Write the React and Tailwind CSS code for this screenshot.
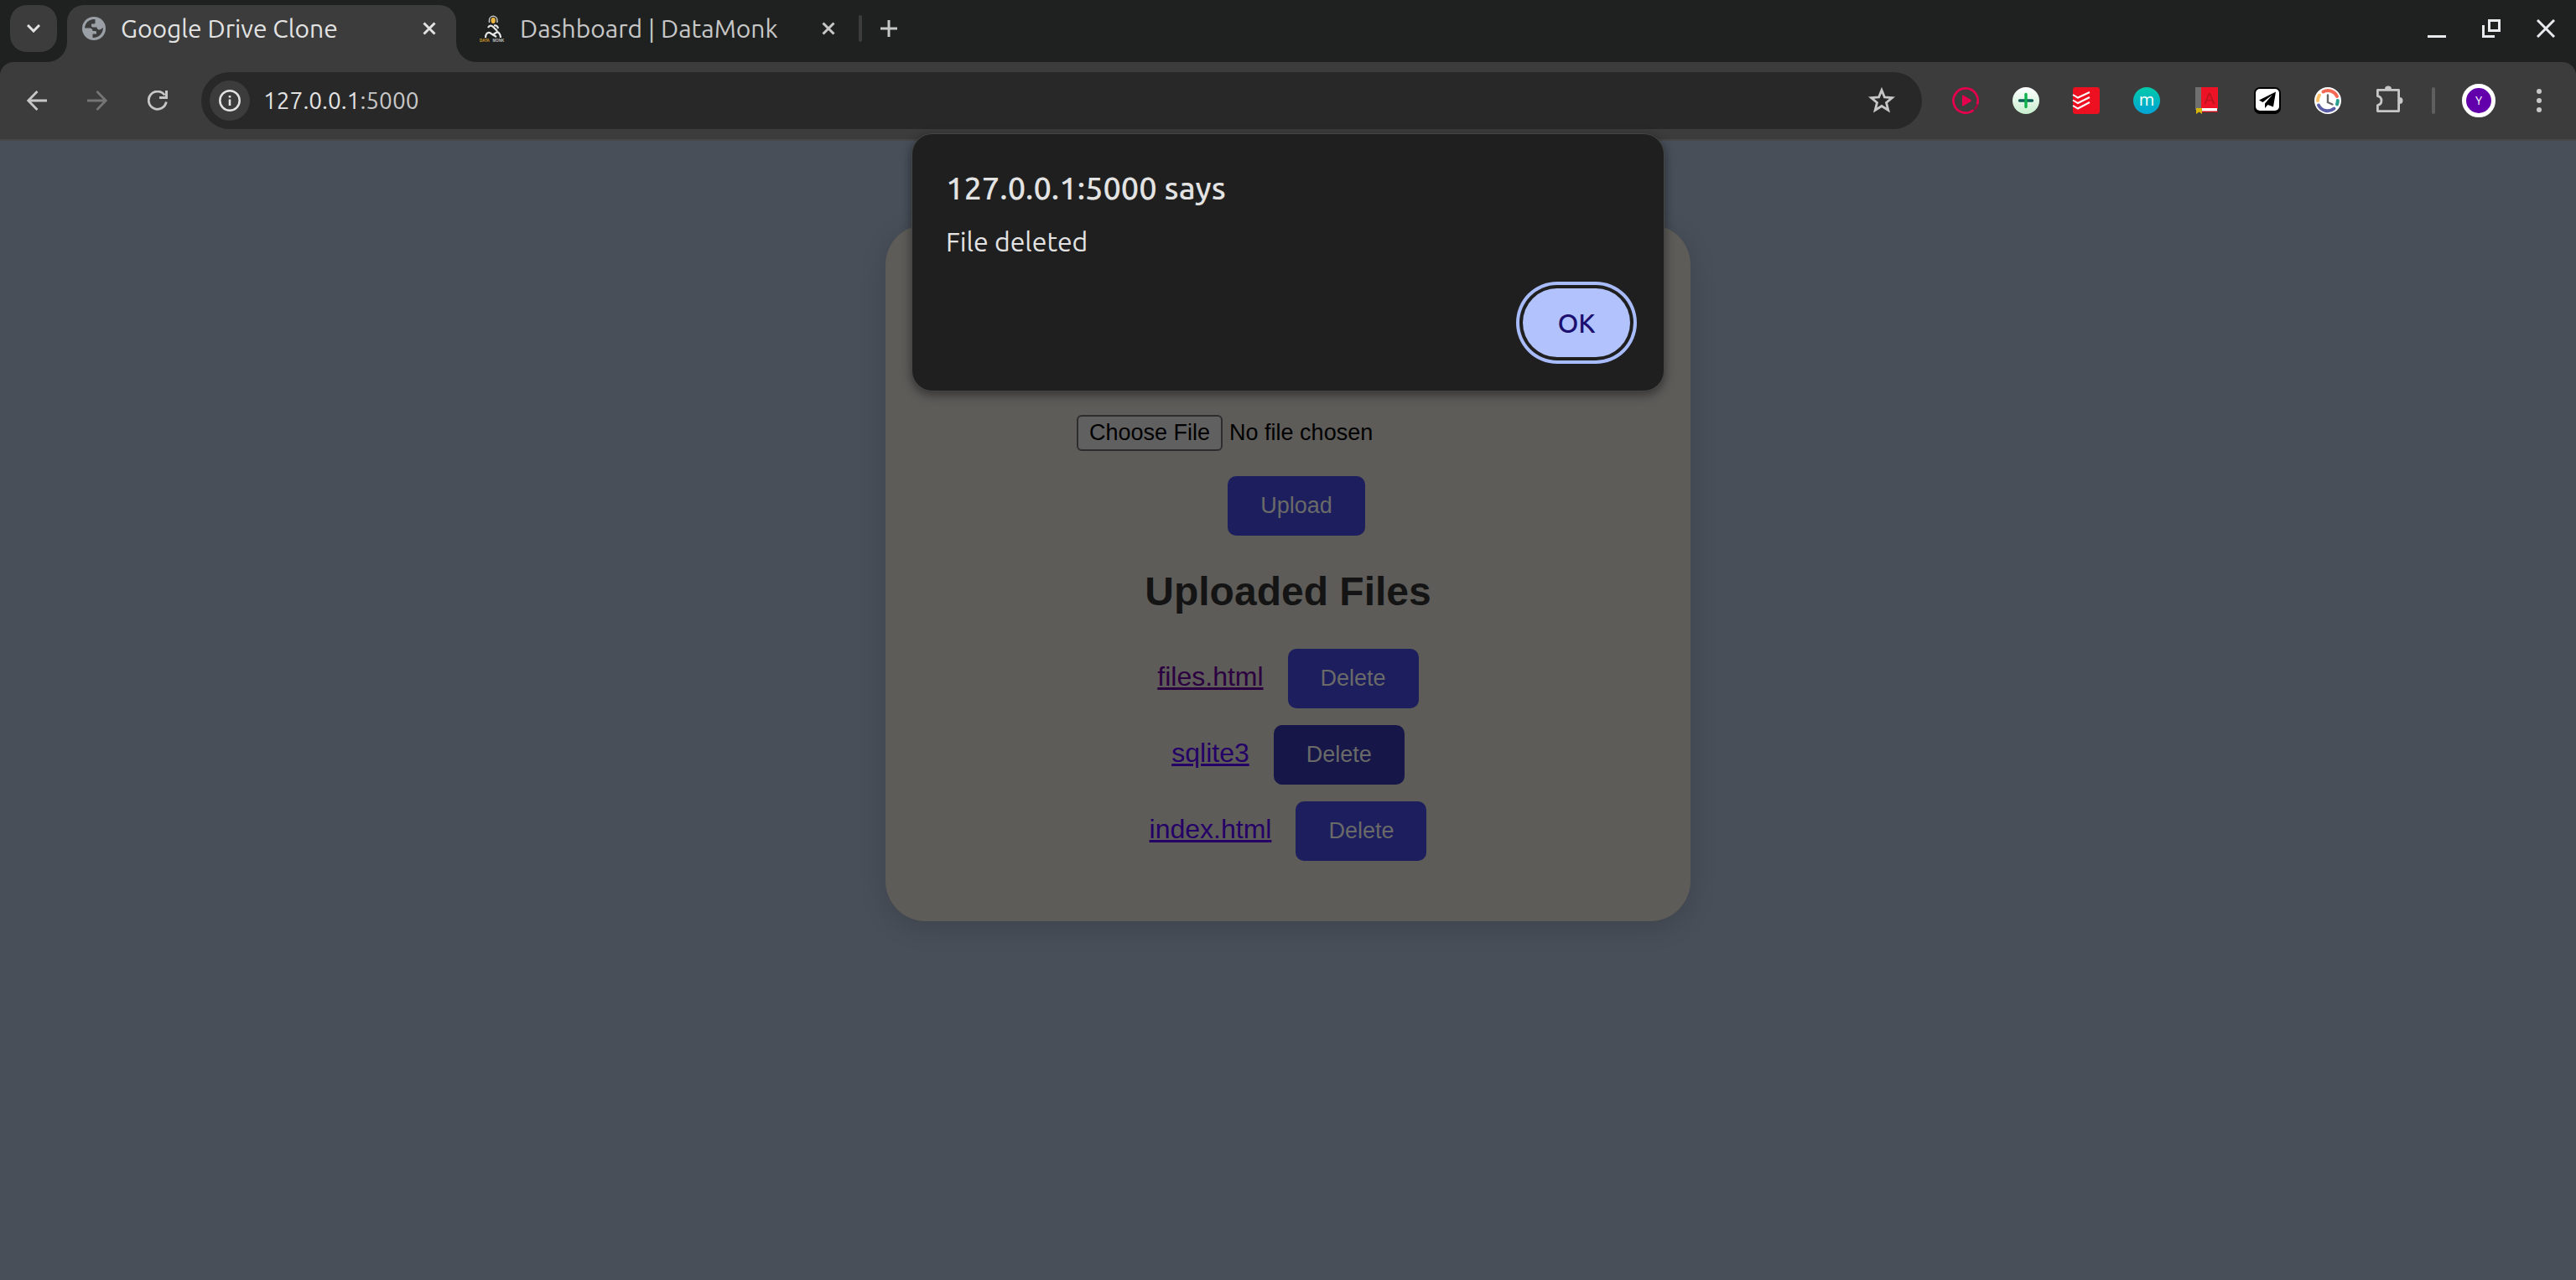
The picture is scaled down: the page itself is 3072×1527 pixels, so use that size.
const UI = "font-['Ubuntu','Noto_Sans',sans-serif]";

const Svg = ({ children, className, vb = "0 0 32 32" }) => (
  <svg viewBox={vb} className={className} fill="none" aria-hidden="true">{children}</svg>
);

const Cross = ({ className }) => (
  <Svg vb="0 0 16 16" className={className}>
    <path d="M1.5 1.5 14.5 14.5M14.5 1.5 1.5 14.5" stroke="currentColor" strokeWidth="3" />
  </Svg>
);

const Globe = () => (
  <Svg vb="0 0 28 28" className="size-7 shrink-0">
    <circle cx="14" cy="14" r="14" fill="#9aa0a6" />
    <path d="M12 3.2C7 4 3.2 8.400 3.100 13.500L9 13.500C11 13.500 12.500 15 12.500 17L15.500 17C16.500 17 17 17.600 17 18.500L17 20.500L12.500 20.500L12.500 24.900C17 25.400 21 23 23 19.800C24.400 17.600 25 15.500 24.900 13L22 15C20 16 17.500 15 17.500 12.500L13 12.500C11.500 12.500 11 11.500 11 10.500L11 8.500L14 8.500C15.500 8.500 15.500 7.500 15.500 6.500L15.500 3.200C14.500 3 13 3 12 3.200Z" fill="#3c3c3c" />
  </Svg>
);

const Monk = () => (
  <Svg vb="0 0 32 32" className="size-8 shrink-0">
    <path d="M11.500 9V6a4.700 4.700 0 0 1 9.400 0V9" stroke="#c9c9c9" strokeWidth="1.500" />
    <ellipse cx="16.200" cy="6.500" rx="2.700" ry="3.400" fill="#eab543" />
    <path d="M10 15c1.500-3 4-3 6-1l5 5M22 16c-.5-3-2.500-4-5-3.500M7 27c0-4 2-7 5-6l8 5M25 27c0-4-2-6-4-7l-6 4" stroke="#e8e8e8" strokeWidth="2.200" />
    <text x="0" y="32" fontSize="4.500" fontWeight="700" fontFamily="Liberation Sans" fill="#d9a02c">DATA</text>
    <text x="15.500" y="32" fontSize="4.500" fontWeight="700" fontFamily="Liberation Sans" fill="#bdbdbd">MONK</text>
  </Svg>
);

const extensions = [
  ["Video player", (
    <>
      <path d="M25.500 27.200A14.600 14.600 0 1 1 30 20.500" stroke="#e5004f" strokeWidth="2.800" />
      <path d="M27 26.500 30.500 21" stroke="#a30a3c" strokeWidth="2.500" />
      <path d="M12 10.500Q12 9 13.500 9.800L22.500 15Q24 16 22.500 17L13.500 22.300Q12 23 12 21.500Z" fill="#e5004f" />
    </>
  )],
  ["Add", (
    <>
      <defs><linearGradient id="mint" x1="0" y1="0" x2="0" y2="1"><stop stopColor="#fff" /><stop offset="1" stopColor="#c8efce" /></linearGradient></defs>
      <circle cx="16" cy="16" r="16" fill="url(#mint)" />
      <path d="M8.500 16H23.500" stroke="#0b5f57" strokeWidth="3.400" strokeLinecap="round" />
      <path d="M16 8.500V23.500" stroke="#10b24c" strokeWidth="3.400" strokeLinecap="round" />
    </>
  )],
  ["Tasks", (
    <>
      <rect width="32" height="32" rx="3" fill="#ec1020" />
      <path d="M0 9 6 12.500 20 6M0 15.500 6 19 20 12M0 22 6 25.500 20 18" stroke="#fff" strokeWidth="2" />
    </>
  )],
  ["Mail", (
    <>
      <defs><linearGradient id="teal" x1="0" y1="0" x2="0" y2="1"><stop stopColor="#00cba9" /><stop offset="1" stopColor="#00a3d6" /></linearGradient></defs>
      <circle cx="16" cy="16" r="16" fill="url(#teal)" />
      <text x="16" y="21.500" textAnchor="middle" fontSize="20" fontFamily="Open Sans" fill="#fff">m</text>
    </>
  )],
  ["Dictionary", (
    <>
      <rect x="2" y="0" width="7" height="27" fill="#707070" />
      <rect x="9" y="0" width="20" height="26" fill="#ee1226" />
      <text x="18.500" y="20" textAnchor="middle" fontSize="19" fontFamily="Liberation Sans" fill="#b9141f">A</text>
      <rect x="7" y="25" width="21" height="4" fill="#fff" />
      <rect x="8" y="28.500" width="21" height="1.500" fill="#c30f1c" />
      <path d="M3 25H10V32L6.500 29.500 3 32Z" fill="#d9b50c" />
    </>
  )],
  ["Send", (
    <>
      <rect width="32" height="32" rx="7" fill="#000" />
      <rect x="2" y="2" width="28" height="26" rx="5" fill="#fff" />
      <path d="M26 5.500 6 15.500 10.500 18 22 9 13 19.500V25L16.500 21 23 23.500Z" fill="#000" />
    </>
  )],
  ["Timer", (
    <>
      <circle cx="16" cy="16" r="16" fill="#fff" />
      <path d="M10.500 5.500A12 12 0 0 1 27 11" stroke="#f56a55" strokeWidth="4" strokeLinecap="round" />
      <path d="M27.800 16A12 12 0 0 1 27 20.500" stroke="#2a9d8f" strokeWidth="4" strokeLinecap="round" />
      <path d="M5 21.500A12 12 0 0 0 23.500 25.500" stroke="#5b5ea6" strokeWidth="4" strokeLinecap="round" />
      <path d="M4 16A12 12 0 0 1 6 9.500" stroke="#ffc06a" strokeWidth="4" strokeLinecap="round" />
      <path d="M16 9.500V18L21.500 20.500" stroke="#666" strokeWidth="2.400" strokeLinecap="round" />
    </>
  )],
  ["Extensions", (
    <>
      <path d="M3.400 3.400H28.600V28.600H3.400V21.500A5.600 5.600 0 0 0 3.400 10.500Z" stroke="#c7c7c7" strokeWidth="2.800" strokeLinejoin="round" />
      <path d="M12 2.500a4 4 0 0 1 8 0ZM29.500 12a4 4 0 0 1 0 8Z" fill="#c7c7c7" />
    </>
  )],
];

const files = [
  { name: "files.html", link: "text-[#2b0040]", button: "bg-[#1c1e5e]" },
  { name: "sqlite3", link: "text-[#240066]", button: "bg-[#161748]" },
  { name: "index.html", link: "text-[#240066]", button: "bg-[#1c1e5e]" },
];

const actionButton = "rounded-[10px] px-[39px] py-5 text-[27px] leading-[31px] text-[#6a6a68]";

function TabStrip() {
  return (
    <div className="flex h-[74px] items-start bg-[#1f2120] pl-3 pt-1.5">
      <button aria-label="Search tabs" className="flex size-14 shrink-0 items-center justify-center rounded-[20px] bg-[#3c3c3c]">
        <Svg vb="0 0 16 10" className="h-2.5 w-4"><path d="M1 1 8 8 15 1" stroke="#e3e3e3" strokeWidth="3" /></Svg>
      </button>
      <div className="relative ml-3 flex h-[68px] w-[464px] shrink-0 items-start rounded-t-[20px] bg-[#3c3c3c] pl-[18px] pr-6">
        <Svg vb="0 0 24 24" className="absolute -left-6 bottom-0 size-6"><path d="M24 0V24H0A24 24 0 0 0 24 0Z" fill="#3c3c3c" /></Svg>
        <Svg vb="0 0 24 24" className="absolute -right-6 bottom-0 size-6"><path d="M0 0V24H24A24 24 0 0 1 0 0Z" fill="#3c3c3c" /></Svg>
        <div className="flex h-14 w-full items-center">
          <Globe />
          <span className="ml-[18px] flex-1 whitespace-nowrap text-[30px] leading-10 text-[#e3e3e3]">Google Drive Clone</span>
          <button aria-label="Close tab" className="text-[#e3e3e3]"><Cross className="size-4" /></button>
        </div>
      </div>
      <div className="flex h-14 w-[452px] shrink-0 items-center pl-7">
        <Monk />
        <span className="ml-4 flex-1 whitespace-nowrap text-[30px] leading-10 text-[#c7c7c7]">Dashboard | DataMonk</span>
        <button aria-label="Close tab" className="text-[#c7c7c7]"><Cross className="size-4" /></button>
      </div>
      <div className="flex h-14 flex-1 items-center pl-7 pr-[25px] text-[#e8eaed]">
        <span className="h-8 w-1 rounded bg-[#3c3c3c]" />
        <button aria-label="New tab" className="ml-[22px] text-[#c7c7c7]">
          <Svg vb="0 0 20 20" className="size-5"><path d="M0 10H20M10 0V20" stroke="currentColor" strokeWidth="3" /></Svg>
        </button>
        <div className="ml-auto flex gap-[43px]">
          <button aria-label="Minimize"><Svg vb="0 0 22 22" className="size-[22px]"><path d="M0 20.500H22" stroke="currentColor" strokeWidth="3" /></Svg></button>
          <button aria-label="Restore"><Svg vb="0 0 22 22" className="size-[22px]"><path d="M8.500 1.500H20.500V13.500H8.500ZM1.500 7V20.500H15" stroke="currentColor" strokeWidth="3" /></Svg></button>
          <button aria-label="Close window"><Svg vb="0 0 22 22" className="size-[22px]"><path d="M1 1 21 21M21 1 1 21" stroke="currentColor" strokeWidth="3" /></Svg></button>
        </div>
      </div>
    </div>
  );
}

function Toolbar() {
  return (
    <div className="bg-[#1f2120]">
      <div className="flex h-[94px] items-center rounded-t-2xl border-b-2 border-[#464746] bg-[#3c3c3c] pl-8 pr-[41px] text-[#c7c7c7]">
        <div className="flex gap-12">
          <button aria-label="Back"><Svg vb="0 0 24 24" className="size-6"><path d="M24 12H2M12.500 1 1.800 12 12.500 23" stroke="currentColor" strokeWidth="2.800" /></Svg></button>
          <button aria-label="Forward" className="text-[#757575]"><Svg vb="0 0 24 24" className="size-6"><path d="M0 12H22M11.500 1 22.200 12 11.500 23" stroke="currentColor" strokeWidth="2.800" /></Svg></button>
          <button aria-label="Reload"><Svg vb="0 0 24 24" className="size-6"><path d="M22.300 13.500A10.600 10.600 0 1 1 20.500 5.500" stroke="currentColor" strokeWidth="2.800" /><path d="M24 0V10H14V7H21V0Z" fill="currentColor" /></Svg></button>
        </div>
        <div className="ml-10 flex h-[68px] flex-1 items-center rounded-full bg-[#282828] pl-2.5 pr-8">
          <button aria-label="View site information" className="flex size-12 items-center justify-center rounded-full bg-[#3c3c3c] text-[#e3e3e3]">
            <Svg vb="0 0 26 26" className="size-[26px]"><circle cx="13" cy="13" r="11.700" stroke="currentColor" strokeWidth="2.500" /><path d="M13 11.500V19M13 7V9.500" stroke="currentColor" strokeWidth="2.600" /></Svg>
          </button>
          <a href="http://127.0.0.1:5000" className="ml-4 text-[28px] leading-10 text-[#e3e3e3]">127.0.0.1<span className="text-[#c7c7c7]">:5000</span></a>
          <button aria-label="Bookmark this tab" className="ml-auto">
            <Svg className="size-8"><path d="M16 3.500 19.400 12 28.500 12.600 21.500 18.400 23.800 27.500 16 22.500 8.200 27.500 10.500 18.400 3.500 12.600 12.600 12Z" stroke="currentColor" strokeWidth="2.800" /></Svg>
          </button>
        </div>
        <div className="ml-9 flex gap-10">
          {extensions.map(([label, art]) => (
            <button key={label} aria-label={label}><Svg className="size-8 overflow-visible">{art}</Svg></button>
          ))}
        </div>
        <span className="ml-9 h-8 w-1 rounded bg-[#5f5f5f]" />
        <button aria-label="Profile" className="ml-8 flex size-10 items-center justify-center rounded-full border-[5px] border-white bg-[#6200ab] text-[14px] text-white">Y</button>
        <button aria-label="Menu" className="ml-[49px]">
          <Svg vb="0 0 6 28" className="h-7 w-1.5"><g fill="currentColor"><circle cx="3" cy="3" r="3" /><circle cx="3" cy="14" r="3" /><circle cx="3" cy="25" r="3" /></g></Svg>
        </button>
      </div>
    </div>
  );
}

function AlertDialog() {
  return (
    <div role="alertdialog" aria-labelledby="dialog-title" aria-describedby="dialog-text" className={`absolute left-1/2 top-40 flex w-[896px] -translate-x-1/2 flex-col rounded-3xl bg-[#1f1f1f] px-10 pb-10 pt-11 text-[#e3e3e3] shadow-[0_4px_12px_2px_rgba(0,0,0,0.4)] ring-1 ring-[#454746] ${UI}`}>
      <h1 id="dialog-title" className="text-[38px] leading-10 font-medium">127.0.0.1:5000 says</h1>
      <p id="dialog-text" className="mt-6 text-[32px] leading-10">File deleted</p>
      <button className="mt-9 h-[82px] w-32 self-end rounded-full bg-[#b1c2fc] text-[32px] font-medium text-[#1c0f70] ring-4 ring-[#a8bbfb] ring-offset-4 ring-offset-[#1f1f1f]">OK</button>
    </div>
  );
}

export default function App() {
  return (
    <div className="relative flex min-h-screen flex-col bg-[#484f59]">
      <header className={UI}>
        <TabStrip />
        <Toolbar />
      </header>
      <main className="mx-auto mt-[100px] w-[960px] rounded-[48px] bg-[#5e5c59] px-10 pb-[72px] pt-[227px] font-['Liberation_Sans',Arial,sans-serif] shadow-[0_8px_32px_rgba(0,0,0,0.14)]">
        <form className="flex flex-col items-center" onSubmit={(e) => e.preventDefault()}>
          <input
            type="file"
            aria-label="File to upload"
            className="w-[504px] text-[27px] leading-[31px] text-black file:mr-2 file:rounded-md file:border-2 file:border-solid file:border-[#2d2d2d] file:bg-[#606060] file:px-[13px] file:py-1 file:text-black"
          />
          <button type="submit" className={`ml-5 mt-[30px] bg-[#1c1e5e] ${actionButton}`}>Upload</button>
        </form>
        <h2 className="mt-[39px] text-center text-5xl font-bold leading-[55px] text-[#141414]">Uploaded Files</h2>
        <ul className="mt-[41px] flex flex-col gap-5">
          {files.map((f) => (
            <li key={f.name} className="flex items-baseline justify-center gap-[29px]">
              <a href={`/${f.name}`} className={`text-[32px] leading-9 underline ${f.link}`}>{f.name}</a>
              <button className={`${f.button} ${actionButton}`}>Delete</button>
            </li>
          ))}
        </ul>
      </main>
      <AlertDialog />
    </div>
  );
}
